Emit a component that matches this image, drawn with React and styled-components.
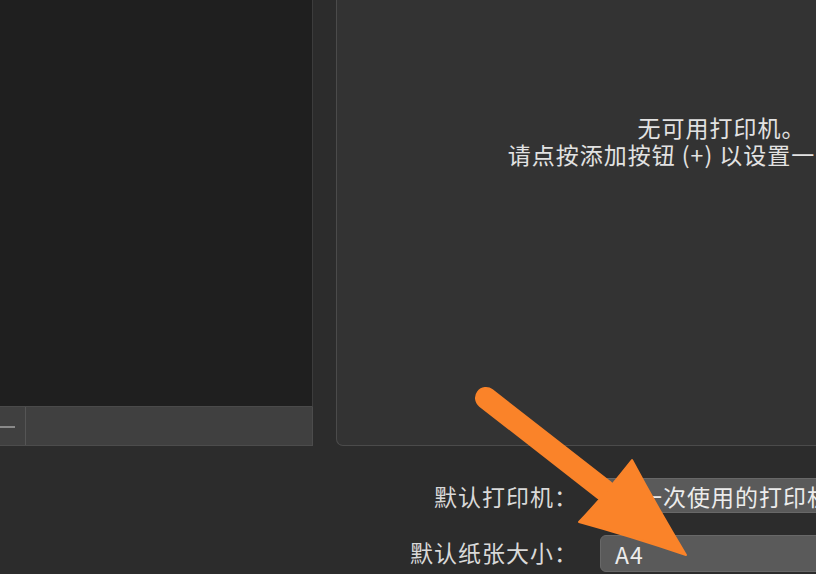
import React from "react";
import styled, { createGlobalStyle } from "styled-components";

const GlobalStyle = createGlobalStyle`
  html, body {
    margin: 0;
    padding: 0;
    background: #2c2c2c;
    overflow: hidden;
  }
  body {
    font-family: "Noto Sans CJK SC", "Noto Sans", sans-serif;
    color: #dedede;
  }
`;

const Window = styled.div`
  position: relative;
  width: 816px;
  height: 574px;
  overflow: hidden;
  background: #2c2c2c;
`;

const TopArea = styled.div`
  display: flex;
  gap: 23px;
  height: 446px;
`;

const ListColumn = styled.div`
  display: flex;
  flex-direction: column;
  width: 313px;
  flex-shrink: 0;
`;

const PrinterList = styled.div`
  flex: 1;
  background: #1f1f1f;
  border-right: 1px solid #3c3c3c;
  border-bottom: 1px solid #4a4a4a;
`;

const Toolbar = styled.div`
  display: flex;
  height: 38px;
  background: #404040;
  border-right: 1px solid #4c4c4c;
  border-bottom: 1px solid #4c4c4c;
`;

const ToolButton = styled.div`
  width: 25px;
  display: flex;
  align-items: center;
  border-right: 1px solid #555;
`;

const Minus = styled.span`
  display: block;
  width: 15px;
  height: 2px;
  margin-top: 1px;
  background: #8a8a8a;
`;

const DetailPanel = styled.div`
  width: 770px;
  flex-shrink: 0;
  background: #333333;
  border-left: 1px solid #4b4b4b;
  border-bottom: 1px solid #4b4b4b;
  border-bottom-left-radius: 7px;
  padding-top: 114px;
  box-sizing: border-box;
  display: flex;
  flex-direction: column;
  align-items: center;
  overflow: hidden;
`;

const EmptyLine = styled.div`
  font-size: 23px;
  line-height: 27px;
  letter-spacing: 1px;
  color: #e2e2e2;
  white-space: nowrap;
`;

const Form = styled.div`
  display: grid;
  grid-template-columns: 578px 420px;
  column-gap: 22px;
  row-gap: 22px;
  padding-top: 32px;
`;

const Label = styled.div`
  font-size: 23px;
  letter-spacing: 1px;
  text-align: right;
  align-self: center;
  margin-bottom: ${(p) => p.$lift || 0}px;
  color: #d9d9d9;
  white-space: nowrap;
`;

const PopUp = styled.div`
  height: ${(p) => p.$h}px;
  box-sizing: border-box;
  background: #5a5a5a;
  border: 1px solid #686868;
  border-radius: 6px;
  padding-left: 14px;
  display: flex;
  align-items: center;
  font-size: 23px;
  letter-spacing: 1px;
  color: #ececec;
  white-space: nowrap;
  overflow: hidden;
`;

const ArrowLayer = styled.svg`
  position: absolute;
  left: 0;
  top: 0;
  pointer-events: none;
`;

function OrangeArrow() {
  return (
    <ArrowLayer width="816" height="574" viewBox="0 0 816 574">
      <line
        x1="486"
        y1="398"
        x2="604"
        y2="490"
        stroke="#fa8329"
        strokeWidth="22"
        strokeLinecap="round"
      />
      <path
        d="M579 522 Q602 498 632 460 Q656 505 686 555 Q630 536 579 522 Z"
        fill="#fa8329"
        stroke="#fa8329"
        strokeWidth="2"
        strokeLinejoin="round"
      />
    </ArrowLayer>
  );
}

export default function App() {
  return (
    <Window>
      <GlobalStyle />
      <TopArea>
        <ListColumn>
          <PrinterList />
          <Toolbar>
            <ToolButton>
              <Minus />
            </ToolButton>
          </Toolbar>
        </ListColumn>
        <DetailPanel>
          <EmptyLine>无可用打印机。</EmptyLine>
          <EmptyLine>请点按添加按钮 (+) 以设置一台打印机。</EmptyLine>
        </DetailPanel>
      </TopArea>
      <Form>
        <Label>默认打印机：</Label>
        <PopUp $h={35}>上一次使用的打印机</PopUp>
        <Label $lift={12}>默认纸张大小：</Label>
        <PopUp $h={37}>A4</PopUp>
      </Form>
      <OrangeArrow />
    </Window>
  );
}
